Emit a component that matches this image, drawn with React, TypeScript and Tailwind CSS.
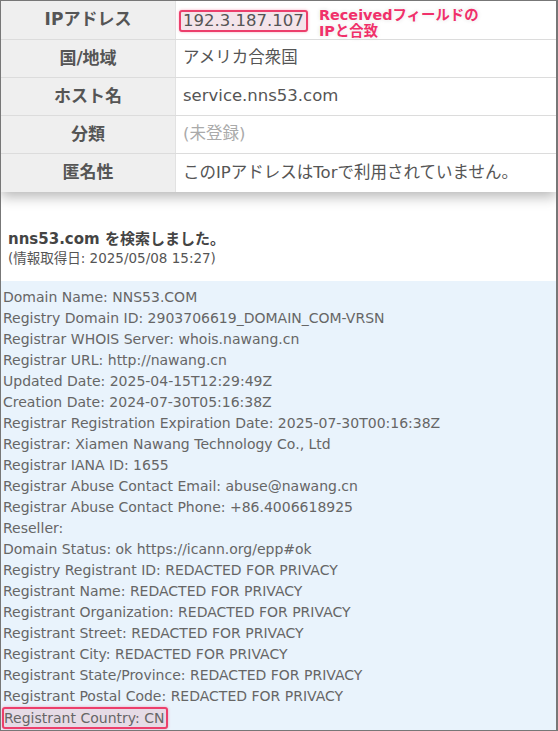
const FONT = '"DejaVu Sans", "Noto Sans CJK JP", sans-serif';

type Row = { label: string; value: string; muted?: boolean; highlight?: boolean };

const rows: Row[] = [
  { label: "IPアドレス", value: "192.3.187.107", highlight: true },
  { label: "国/地域", value: "アメリカ合衆国" },
  { label: "ホスト名", value: "service.nns53.com" },
  { label: "分類", value: "(未登録)", muted: true },
  { label: "匿名性", value: "このIPアドレスはTorで利用されていません。" },
];

const whois = [
  "Domain Name: NNS53.COM",
  "Registry Domain ID: 2903706619_DOMAIN_COM-VRSN",
  "Registrar WHOIS Server: whois.nawang.cn",
  "Registrar URL: http://nawang.cn",
  "Updated Date: 2025-04-15T12:29:49Z",
  "Creation Date: 2024-07-30T05:16:38Z",
  "Registrar Registration Expiration Date: 2025-07-30T00:16:38Z",
  "Registrar: Xiamen Nawang Technology Co., Ltd",
  "Registrar IANA ID: 1655",
  "Registrar Abuse Contact Email: abuse@nawang.cn",
  "Registrar Abuse Contact Phone: +86.4006618925",
  "Reseller:",
  "Domain Status: ok https://icann.org/epp#ok",
  "Registry Registrant ID: REDACTED FOR PRIVACY",
  "Registrant Name: REDACTED FOR PRIVACY",
  "Registrant Organization: REDACTED FOR PRIVACY",
  "Registrant Street: REDACTED FOR PRIVACY",
  "Registrant City: REDACTED FOR PRIVACY",
  "Registrant State/Province: REDACTED FOR PRIVACY",
  "Registrant Postal Code: REDACTED FOR PRIVACY",
];

export default function App() {
  return (
    <div
      className="h-[731px] w-[558px] overflow-hidden border border-r-2 border-[#777] bg-white text-[#555]"
      style={{ fontFamily: FONT }}
    >
      {/* IP info table */}
      <div className="relative z-10 shadow-[0_5px_12px_rgba(0,0,0,0.28)]">
        {rows.map((row, i) => (
          <div
            key={row.label}
            className={`flex ${i === 0 ? "h-[39px]" : "h-[38px]"} ${i < rows.length - 1 ? "border-b border-[#dcdcdc]" : ""}`}
          >
            <div className="flex w-[175px] shrink-0 items-center justify-center border-r border-[#e2e2e2] bg-[#efefef] text-[17px] font-bold">
              {row.label}
            </div>
            <div className="relative flex flex-1 items-center pl-[7px] text-[16.5px]">
              {row.highlight ? (
                <>
                  <span className="-ml-[4px] mt-[1px] rounded-[3px] border-2 border-[#ec3f6c] bg-[#f4e4ea] px-[2px] leading-[18px] shadow-[0_0_3px_rgba(236,63,108,0.4)]">
                    {row.value}
                  </span>
                  {/* callout */}
                  <span className="absolute left-[143px] top-[6px] text-[14.4px] font-bold leading-[16px] text-[#f0306a] [text-shadow:0_0_3px_#fff,0_0_4px_rgba(0,0,0,0.15)]">
                    Receivedフィールドの
                    <br />
                    IPと合致
                  </span>
                </>
              ) : (
                <span className={row.muted ? "text-[#aaa]" : ""}>{row.value}</span>
              )}
            </div>
          </div>
        ))}
      </div>

      {/* search header */}
      <div className="px-[7px] pb-[13px] pt-[37px]">
        <div className="text-[15px] font-bold leading-[20px] text-[#444]">nns53.com を検索しました。</div>
        <div className="text-[13.5px] leading-[19px] text-[#555]">(情報取得日: 2025/05/08 15:27)</div>
      </div>

      {/* whois result */}
      <div className="h-full bg-[#e9f3fc] px-[2px] pt-[6px] text-[14px] leading-[21px] text-[#666]">
        {whois.map((line) => (
          <div key={line} className="whitespace-nowrap">
            {line}
          </div>
        ))}
        <div>
          <span className="-ml-[1px] inline-block rounded-[3px] border-2 border-[#ec3f6c] bg-[#e6dbe6] pr-[2px] leading-[18px] shadow-[0_0_3px_rgba(236,63,108,0.4)]">
            Registrant Country: CN
          </span>
        </div>
      </div>
    </div>
  );
}
